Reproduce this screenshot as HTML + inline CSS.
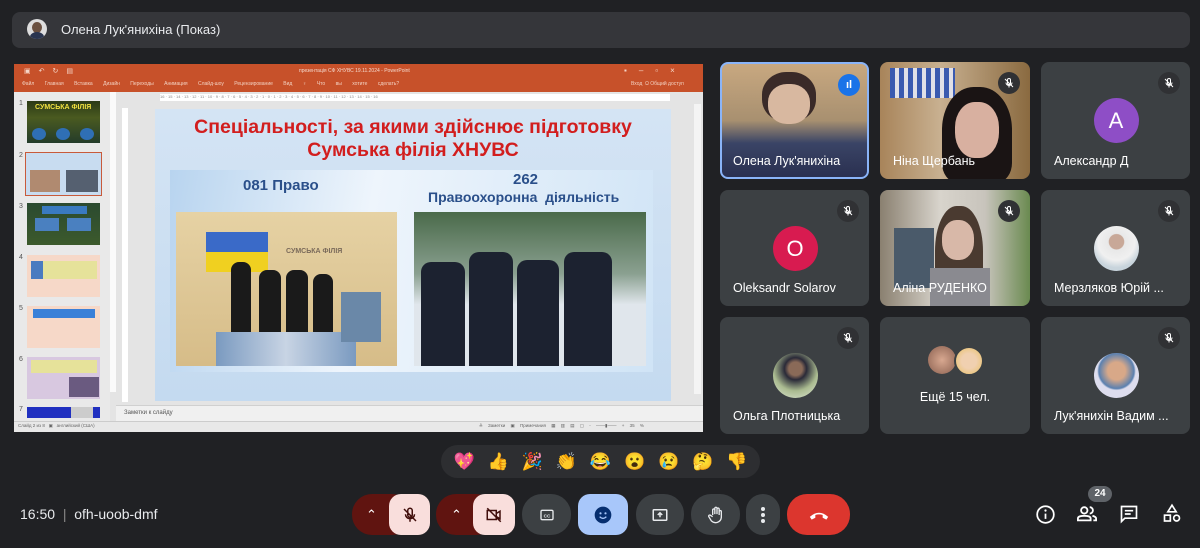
<!DOCTYPE html>
<html><head><meta charset="utf-8"><style>
*{box-sizing:border-box;margin:0;padding:0}
body{width:1200px;height:548px;background:#202124;font-family:"Liberation Sans",sans-serif;position:relative;overflow:hidden;color:#e8eaed}
.abs{position:absolute}
.tile{position:absolute;background:#3c4043;border-radius:8px;overflow:hidden}
.nm{position:absolute;left:13px;bottom:11px;color:#fff;font-size:12.5px;white-space:nowrap}
.mut{position:absolute;right:10px;top:10px;width:22px;height:22px;border-radius:50%;background:#303134;display:flex;align-items:center;justify-content:center}
.av{position:absolute;left:50%;top:36px;width:45px;height:45px;margin-left:-22px;border-radius:50%;color:#fff;font-size:22px;display:flex;align-items:center;justify-content:center}
.btn{position:absolute;top:494px;height:41px;border-radius:20px;background:#3c4043;display:flex;align-items:center;justify-content:center}
.th{position:absolute;left:27px;width:73px;height:42px}
.tn{position:absolute;left:19px;font-size:7px;color:#555}
</style></head><body>
<div class="abs" style="left:12px;top:12px;width:1178px;height:36px;background:#35363a;border-radius:8px"></div>
<div class="abs" style="left:27px;top:19px;width:20px;height:20px;border-radius:50%;background:#ddd;overflow:hidden"><div style="position:absolute;left:5px;top:3px;width:10px;height:11px;border-radius:50%;background:#6a5040"></div><div style="position:absolute;left:3px;top:13px;width:14px;height:10px;border-radius:50%;background:#2a3550"></div></div>
<div class="abs" style="left:61px;top:22px;font-size:13px;color:#e8eaed">Олена Лук'янихіна (Показ)</div>

<div class="abs" style="left:14px;top:64px;width:689px;height:368px;background:#e4e4e4;overflow:hidden">
  <div class="abs" style="left:0;top:0;width:689px;height:28px;background:#c7512a"></div>
  <div class="abs" style="left:285px;top:4px;font-size:5px;color:#f5d8cc">презентація СФ ХНУВС 19.11.2024 - PowerPoint</div>
  <div class="abs" style="left:10px;top:3px;font-size:7px;letter-spacing:8px;color:#f6d6c8">▣↶↻▤</div>
  <div class="abs" style="left:610px;top:2px;font-size:8px;color:#f6d6c8;letter-spacing:12px">▪–▫×</div>
  <div class="abs" style="left:8px;top:17px;font-size:5px;color:#f3d0c0;word-spacing:9px">Файл Главная Вставка Дизайн Переходы Анимация Слайд-шоу Рецензирование Вид ♀ Что вы хотите сделать?</div>
  <div class="abs" style="left:617px;top:17px;font-size:5px;color:#f3d0c0">Вход &nbsp;Ω Общий доступ</div>
  <div class="abs" style="left:0;top:28px;width:96px;height:330px;background:#e9e9e9"></div>
  <div class="abs" style="left:96px;top:28px;width:6px;height:300px;background:#fafafa"></div>
  <div class="abs" style="left:146px;top:30px;width:510px;height:7px;background:#fff;font-size:4px;color:#888;overflow:hidden;white-space:nowrap">16 · 15 · 14 · 13 · 12 · 11 · 10 · 9 · 8 · 7 · 6 · 5 · 4 · 3 · 2 · 1 · 0 · 1 · 2 · 3 · 4 · 5 · 6 · 7 · 8 · 9 · 10 · 11 · 12 · 13 · 14 · 15 · 16</div>
  <div class="abs" style="left:108px;top:44px;width:6px;height:294px;background:#fff"></div>
  <div class="abs" style="left:680px;top:40px;width:7px;height:290px;background:#f4f4f4"></div>
  <div class="abs" style="left:102px;top:341px;width:587px;height:16px;background:#f0f0f0;border-top:1px solid #d0d0d0"></div>
  <div class="abs" style="left:110px;top:346px;font-size:6px;color:#555">Заметки к слайду</div>
  <div class="abs" style="left:0;top:357px;width:689px;height:11px;background:#e8e8e8;border-top:1px solid #ccc"></div>
  <div class="abs" style="left:4px;top:359px;font-size:4.5px;color:#666">Слайд 2 из 8 &nbsp; ▣ &nbsp; английский (США)</div>
  <div class="abs" style="left:465px;top:359px;font-size:4.5px;color:#666;word-spacing:4px">≙ Заметки ▣ Примечания ▦ ▥ ▤ ▢ - ——▮—— + 35 %</div>
</div>
<div class="th" style="top:101px;background:linear-gradient(#2b3a16,#4a5a20 40%,#243c2a)"><div style="position:absolute;left:8px;top:3px;font-size:7px;color:#f0e040;font-weight:bold">СУМСЬКА ФІЛІЯ</div><div style="position:absolute;left:5px;top:27px;width:14px;height:12px;border-radius:50%;background:#2f6fb5"></div><div style="position:absolute;left:29px;top:27px;width:14px;height:12px;border-radius:50%;background:#2f6fb5"></div><div style="position:absolute;left:53px;top:27px;width:14px;height:12px;border-radius:50%;background:#2f6fb5"></div></div>
<div class="th" style="top:152px;left:25px;width:77px;height:44px;border:1.5px solid #c85a3a;background:#c8dcf0"><div style="position:absolute;left:4px;top:17px;width:30px;height:22px;background:#b08a70"></div><div style="position:absolute;left:40px;top:17px;width:32px;height:22px;background:#556070"></div></div>
<div class="th" style="top:203px;background:linear-gradient(#2b4a30,#3c5a2c)"><div style="position:absolute;left:15px;top:3px;width:45px;height:8px;background:#3a7ac0"></div><div style="position:absolute;left:8px;top:15px;width:24px;height:13px;background:#4a80c0"></div><div style="position:absolute;left:40px;top:15px;width:24px;height:13px;background:#4a80c0"></div></div>
<div class="th" style="top:255px;background:#f6d8c8"><div style="position:absolute;left:4px;top:6px;width:66px;height:18px;background:#e6e29a;border-left:12px solid #4a7ac0"></div></div>
<div class="th" style="top:306px;background:#f6d8c8"><div style="position:absolute;left:6px;top:3px;width:62px;height:9px;background:#3a80d8"></div></div>
<div class="th" style="top:357px;background:#d8c8e0"><div style="position:absolute;left:4px;top:3px;width:66px;height:13px;background:#e6e29a"></div><div style="position:absolute;left:42px;top:20px;width:30px;height:20px;background:#6a5a80"></div></div>
<div class="th" style="top:407px;height:11px;background:#2030c0"><div style="position:absolute;left:44px;top:0;width:22px;height:11px;background:#ccc"></div></div>
<div class="tn" style="top:100px">1</div><div class="tn" style="top:152px">2</div><div class="tn" style="top:203px">3</div><div class="tn" style="top:254px">4</div><div class="tn" style="top:305px">5</div><div class="tn" style="top:356px">6</div><div class="tn" style="top:406px">7</div>

<div class="abs" style="left:155px;top:109px;width:516px;height:292px;background:linear-gradient(#d4e4f4,#c4daf0);"></div>
<div class="abs" style="left:155px;top:116px;width:516px;text-align:center;color:#d21e1e;font-weight:bold;font-size:19.5px;line-height:23px">Спеціальності, за якими здійснює підготовку<br>Сумська філія ХНУВС</div>
<div class="abs" style="left:170px;top:170px;width:483px;height:202px;background:linear-gradient(100deg,#b8d4ef,#eef5fc 40%,#d0e4f6)"></div>
<div class="abs" style="left:243px;top:177px;color:#2a4f8a;font-weight:bold;font-size:15px">081 Право</div>
<div class="abs" style="left:513px;top:171px;color:#2a4f8a;font-weight:bold;font-size:15px">262</div>
<div class="abs" style="left:428px;top:189px;color:#2a4f8a;font-weight:bold;font-size:14px">Правоохоронна &nbsp;діяльність</div>
<div class="abs" style="left:176px;top:212px;width:221px;height:154px;background:linear-gradient(#e6d2a4,#d6bc88);overflow:hidden">
  <div style="position:absolute;left:30px;top:20px;width:62px;height:40px;background:linear-gradient(#3a6ac8 50%,#f0d020 50%)"></div>
  <div style="position:absolute;left:110px;top:36px;font-size:7px;color:#7a6a5a;font-weight:bold">СУМСЬКА ФІЛІЯ</div>
  <div style="position:absolute;left:55px;top:50px;width:20px;height:80px;background:#1a1a1a;border-radius:8px 8px 0 0"></div>
  <div style="position:absolute;left:83px;top:58px;width:22px;height:72px;background:#1a1a1a;border-radius:8px 8px 0 0"></div>
  <div style="position:absolute;left:110px;top:58px;width:22px;height:72px;background:#1a1a1a;border-radius:8px 8px 0 0"></div>
  <div style="position:absolute;left:137px;top:62px;width:20px;height:68px;background:#1a1a1a;border-radius:8px 8px 0 0"></div>
  <div style="position:absolute;left:40px;top:120px;width:140px;height:34px;background:linear-gradient(90deg,#7a9ac0,#c8d4e4,#7a9ac0)"></div>
  <div style="position:absolute;left:165px;top:80px;width:40px;height:50px;background:#6a88a8"></div>
</div>
<div class="abs" style="left:414px;top:212px;width:232px;height:154px;background:linear-gradient(#4a6a4a,#8aa090 40%,#e0e6ec 60%);overflow:hidden">
  <div style="position:absolute;left:7px;top:50px;width:44px;height:104px;background:#1c2230;border-radius:10px 10px 0 0"></div>
  <div style="position:absolute;left:55px;top:40px;width:44px;height:114px;background:#1c2230;border-radius:10px 10px 0 0"></div>
  <div style="position:absolute;left:103px;top:48px;width:42px;height:106px;background:#1c2230;border-radius:10px 10px 0 0"></div>
  <div style="position:absolute;left:150px;top:40px;width:48px;height:114px;background:#1c2230;border-radius:10px 10px 0 0"></div>
</div>

<div class="tile" style="left:720px;top:62px;width:149px;height:117px;background:linear-gradient(#c8a880,#a89070 50%,#3a4466 70%,#2a3050);border:2px solid #8ab4f8">
  <div style="position:absolute;left:40px;top:8px;width:54px;height:50px;border-radius:45%;background:#3a2a28"></div>
  <div style="position:absolute;left:46px;top:20px;width:42px;height:40px;border-radius:45%;background:#d8b8a0"></div>
  <div style="position:absolute;left:116px;top:10px;width:22px;height:22px;border-radius:50%;background:#1a73e8;color:#fff;font-size:11px;text-align:center;line-height:22px;font-weight:bold">ıl</div>
  <div class="nm" style="left:11px;bottom:9px">Олена Лук'янихіна</div></div>
<div class="tile" style="left:880px;top:62px;width:150px;height:117px;background:linear-gradient(90deg,#a8845a,#c8b090 40%,#8a6a40)">
  <div style="position:absolute;left:10px;top:6px;width:65px;height:30px;background:repeating-linear-gradient(90deg,#3a5ab0 0 5px,#e0e0e8 5px 9px)"></div>
  <div style="position:absolute;left:62px;top:25px;width:70px;height:95px;border-radius:45% 45% 20% 20%;background:#1a1414"></div>
  <div style="position:absolute;left:75px;top:40px;width:44px;height:56px;border-radius:45%;background:#d8b0a0"></div>
  <div class="mut"><svg width="12" height="12" viewBox="0 0 24 24"><path d="M12 3a3 3 0 0 0-3 3v6a3 3 0 0 0 6 0V6a3 3 0 0 0-3-3zM6 11a6 6 0 0 0 12 0M12 17v4M4 4l16 16" stroke="#fff" stroke-width="2" fill="none"/></svg></div>
  <div class="nm">Ніна Щербань</div></div>
<div class="tile" style="left:1041px;top:62px;width:149px;height:117px"><div class="mut"><svg width="12" height="12" viewBox="0 0 24 24"><path d="M12 3a3 3 0 0 0-3 3v6a3 3 0 0 0 6 0V6a3 3 0 0 0-3-3zM6 11a6 6 0 0 0 12 0M12 17v4M4 4l16 16" stroke="#fff" stroke-width="2" fill="none"/></svg></div><div class="av" style="background:#8e4ec6">A</div><div class="nm">Александр Д</div></div>

<div class="tile" style="left:720px;top:190px;width:149px;height:116px"><div class="mut"><svg width="12" height="12" viewBox="0 0 24 24"><path d="M12 3a3 3 0 0 0-3 3v6a3 3 0 0 0 6 0V6a3 3 0 0 0-3-3zM6 11a6 6 0 0 0 12 0M12 17v4M4 4l16 16" stroke="#fff" stroke-width="2" fill="none"/></svg></div><div class="av" style="background:#d81b50">O</div><div class="nm">Oleksandr Solarov</div></div>
<div class="tile" style="left:880px;top:190px;width:150px;height:116px;background:linear-gradient(90deg,#8a8070,#d8d4cc 40%,#c8c4bc 70%,#6a8a50)">
  <div style="position:absolute;left:14px;top:38px;width:40px;height:60px;background:#4a5a6a"></div>
  <div style="position:absolute;left:55px;top:16px;width:48px;height:100px;border-radius:45% 45% 10% 10%;background:#4a3a30"></div>
  <div style="position:absolute;left:62px;top:30px;width:32px;height:40px;border-radius:45%;background:#d8b8a8"></div>
  <div style="position:absolute;left:50px;top:78px;width:60px;height:40px;background:#8a8a90"></div>
  <div class="mut"><svg width="12" height="12" viewBox="0 0 24 24"><path d="M12 3a3 3 0 0 0-3 3v6a3 3 0 0 0 6 0V6a3 3 0 0 0-3-3zM6 11a6 6 0 0 0 12 0M12 17v4M4 4l16 16" stroke="#fff" stroke-width="2" fill="none"/></svg></div>
  <div class="nm">Аліна РУДЕНКО</div></div>
<div class="tile" style="left:1041px;top:190px;width:149px;height:116px"><div class="mut"><svg width="12" height="12" viewBox="0 0 24 24"><path d="M12 3a3 3 0 0 0-3 3v6a3 3 0 0 0 6 0V6a3 3 0 0 0-3-3zM6 11a6 6 0 0 0 12 0M12 17v4M4 4l16 16" stroke="#fff" stroke-width="2" fill="none"/></svg></div><div class="av" style="background:radial-gradient(circle at 50% 35%,#c8a898 20%,#e8e8e8 22%,#f0f0f0 50%,#c8d4dc 70%)"></div><div class="nm">Мерзляков Юрій ...</div></div>

<div class="tile" style="left:720px;top:317px;width:149px;height:117px"><div class="mut"><svg width="12" height="12" viewBox="0 0 24 24"><path d="M12 3a3 3 0 0 0-3 3v6a3 3 0 0 0 6 0V6a3 3 0 0 0-3-3zM6 11a6 6 0 0 0 12 0M12 17v4M4 4l16 16" stroke="#fff" stroke-width="2" fill="none"/></svg></div><div class="av" style="background:radial-gradient(circle at 50% 35%,#8a6a58 18%,#2a2a38 30%,#aabb90 60%,#e0e8d8)"></div><div class="nm">Ольга Плотницька</div></div>
<div class="tile" style="left:880px;top:317px;width:150px;height:117px">
  <div style="position:absolute;left:48px;top:29px;width:28px;height:28px;border-radius:50%;background:radial-gradient(#d8a890,#8a6050)"></div>
  <div style="position:absolute;left:74px;top:29px;width:30px;height:30px;border-radius:50%;background:radial-gradient(#f0d0b0 40%,#e8c060);border:2px solid #3c4043"></div>
  <div style="position:absolute;left:0;width:150px;top:73px;text-align:center;font-size:12.5px;color:#fff">Ещё 15 чел.</div></div>
<div class="tile" style="left:1041px;top:317px;width:149px;height:117px"><div class="mut"><svg width="12" height="12" viewBox="0 0 24 24"><path d="M12 3a3 3 0 0 0-3 3v6a3 3 0 0 0 6 0V6a3 3 0 0 0-3-3zM6 11a6 6 0 0 0 12 0M12 17v4M4 4l16 16" stroke="#fff" stroke-width="2" fill="none"/></svg></div><div class="av" style="background:radial-gradient(circle at 50% 40%,#d8a888 25%,#5a80b0 50%,#dde 55%)"></div><div class="nm">Лук'янихін Вадим ...</div></div>

<div class="abs" style="left:441px;top:445px;width:319px;height:33px;border-radius:17px;background:#2d2e31;display:flex;align-items:center;justify-content:space-around;padding:0 6px;font-size:17px;font-family:'Noto Color Emoji','DejaVu Sans',sans-serif">
<span>💖</span><span>👍</span><span>🎉</span><span>👏</span><span>😂</span><span>😮</span><span>😢</span><span>🤔</span><span>👎</span></div>

<div class="abs" style="left:20px;top:506px;font-size:14px;color:#e8eaed">16:50 &nbsp;<span style="color:#888">|</span>&nbsp; ofh-uoob-dmf</div>

<div class="btn" style="left:352px;width:60px;background:#601410;justify-content:flex-start;padding-left:14px"><span style="color:#fff;font-size:13px">⌃</span></div>
<div class="btn" style="left:389px;width:41px;background:#f9dedc;border-radius:12px"><svg width="18" height="18" viewBox="0 0 24 24"><path d="M12 3a3 3 0 0 0-3 3v6a3 3 0 0 0 6 0V6a3 3 0 0 0-3-3zM6 11a6 6 0 0 0 12 0M12 17v4M4 4l16 16" stroke="#410e0b" stroke-width="2" fill="none"/></svg></div>
<div class="btn" style="left:436px;width:60px;background:#601410;justify-content:flex-start;padding-left:15px"><span style="color:#fff;font-size:13px">⌃</span></div>
<div class="btn" style="left:473px;width:42px;background:#f9dedc;border-radius:12px"><svg width="20" height="18" viewBox="0 0 24 24"><path d="M3 6h12v12H3zM15 10l5-3v10l-5-3M3 3l18 18" stroke="#410e0b" stroke-width="2" fill="none"/></svg></div>
<div class="btn" style="left:522px;width:49px"><svg width="18" height="16" viewBox="0 0 24 24"><rect x="3" y="5" width="18" height="14" rx="2" stroke="#e8eaed" stroke-width="2" fill="none"/><text x="12" y="15.5" font-size="7" fill="#e8eaed" text-anchor="middle" font-family="Liberation Sans" font-weight="bold">CC</text></svg></div>
<div class="btn" style="left:578px;width:50px;background:#a8c7fa;border-radius:12px"><svg width="20" height="20" viewBox="0 0 24 24"><circle cx="12" cy="12" r="10" fill="#062e6f"/><circle cx="9" cy="10" r="1.3" fill="#a8c7fa"/><circle cx="15" cy="10" r="1.3" fill="#a8c7fa"/><path d="M8 14q4 4 8 0" stroke="#a8c7fa" stroke-width="1.6" fill="none"/></svg></div>
<div class="btn" style="left:636px;width:48px"><svg width="20" height="18" viewBox="0 0 24 24"><rect x="3" y="5" width="18" height="14" rx="1" stroke="#e8eaed" stroke-width="2" fill="none"/><path d="M12 15V9M9 12l3-3 3 3" stroke="#e8eaed" stroke-width="2" fill="none"/></svg></div>
<div class="btn" style="left:691px;width:49px"><svg width="20" height="20" viewBox="0 0 24 24"><path d="M8 12V6a1.3 1.3 0 0 1 2.6 0v5V4a1.3 1.3 0 0 1 2.6 0v7V5a1.3 1.3 0 0 1 2.6 0v7V8a1.3 1.3 0 0 1 2.6 0v7a7 7 0 0 1-12 4l-3-5a1.3 1.3 0 0 1 2.2-1.4L8 14" stroke="#e8eaed" stroke-width="1.6" fill="none"/></svg></div>
<div class="btn" style="left:746px;width:34px"><svg width="6" height="18" viewBox="0 0 6 18"><circle cx="3" cy="3" r="2" fill="#e8eaed"/><circle cx="3" cy="9" r="2" fill="#e8eaed"/><circle cx="3" cy="15" r="2" fill="#e8eaed"/></svg></div>
<div class="btn" style="left:787px;width:63px;background:#dc362e"><svg width="22" height="12" viewBox="0 0 24 12"><path d="M2 8q10-9 20 0l-2 3-4-2v-3q-4-1.5-8 0v3l-4 2z" fill="#fff"/></svg></div>

<svg class="abs" style="left:1035px;top:504px" width="21" height="21" viewBox="0 0 24 24"><circle cx="12" cy="12" r="9.5" stroke="#fff" stroke-width="2" fill="none"/><path d="M12 11v6" stroke="#fff" stroke-width="2"/><circle cx="12" cy="7.5" r="1.3" fill="#fff"/></svg>
<div class="abs" style="left:1088px;top:486px;width:24px;height:16px;border-radius:8px;background:#5f6368;font-size:10px;color:#fff;text-align:center;line-height:16px;font-weight:bold">24</div>
<svg class="abs" style="left:1076px;top:504px" width="22" height="20" viewBox="0 0 24 22"><circle cx="9" cy="7" r="3.5" stroke="#fff" stroke-width="2" fill="none"/><path d="M2 18v-2q0-3 7-3t7 3v2z" stroke="#fff" stroke-width="2" fill="none"/><path d="M15 3.5a3.5 3.5 0 0 1 0 7M18 13q4 1 4 3v2h-3" stroke="#fff" stroke-width="2" fill="none"/></svg>
<svg class="abs" style="left:1119px;top:504px" width="20" height="20" viewBox="0 0 24 24"><path d="M3 3h18v14H7l-4 4z" stroke="#fff" stroke-width="2" fill="none"/><path d="M7 8h10M7 12h7" stroke="#fff" stroke-width="2"/></svg>
<svg class="abs" style="left:1162px;top:503px" width="20" height="21" viewBox="0 0 24 24"><path d="M12 2l5 8H7z" stroke="#fff" stroke-width="2" fill="none"/><rect x="3" y="14" width="7" height="7" stroke="#fff" stroke-width="2" fill="none"/><circle cx="17.5" cy="17.5" r="3.5" stroke="#fff" stroke-width="2" fill="none"/></svg>
</body></html>
